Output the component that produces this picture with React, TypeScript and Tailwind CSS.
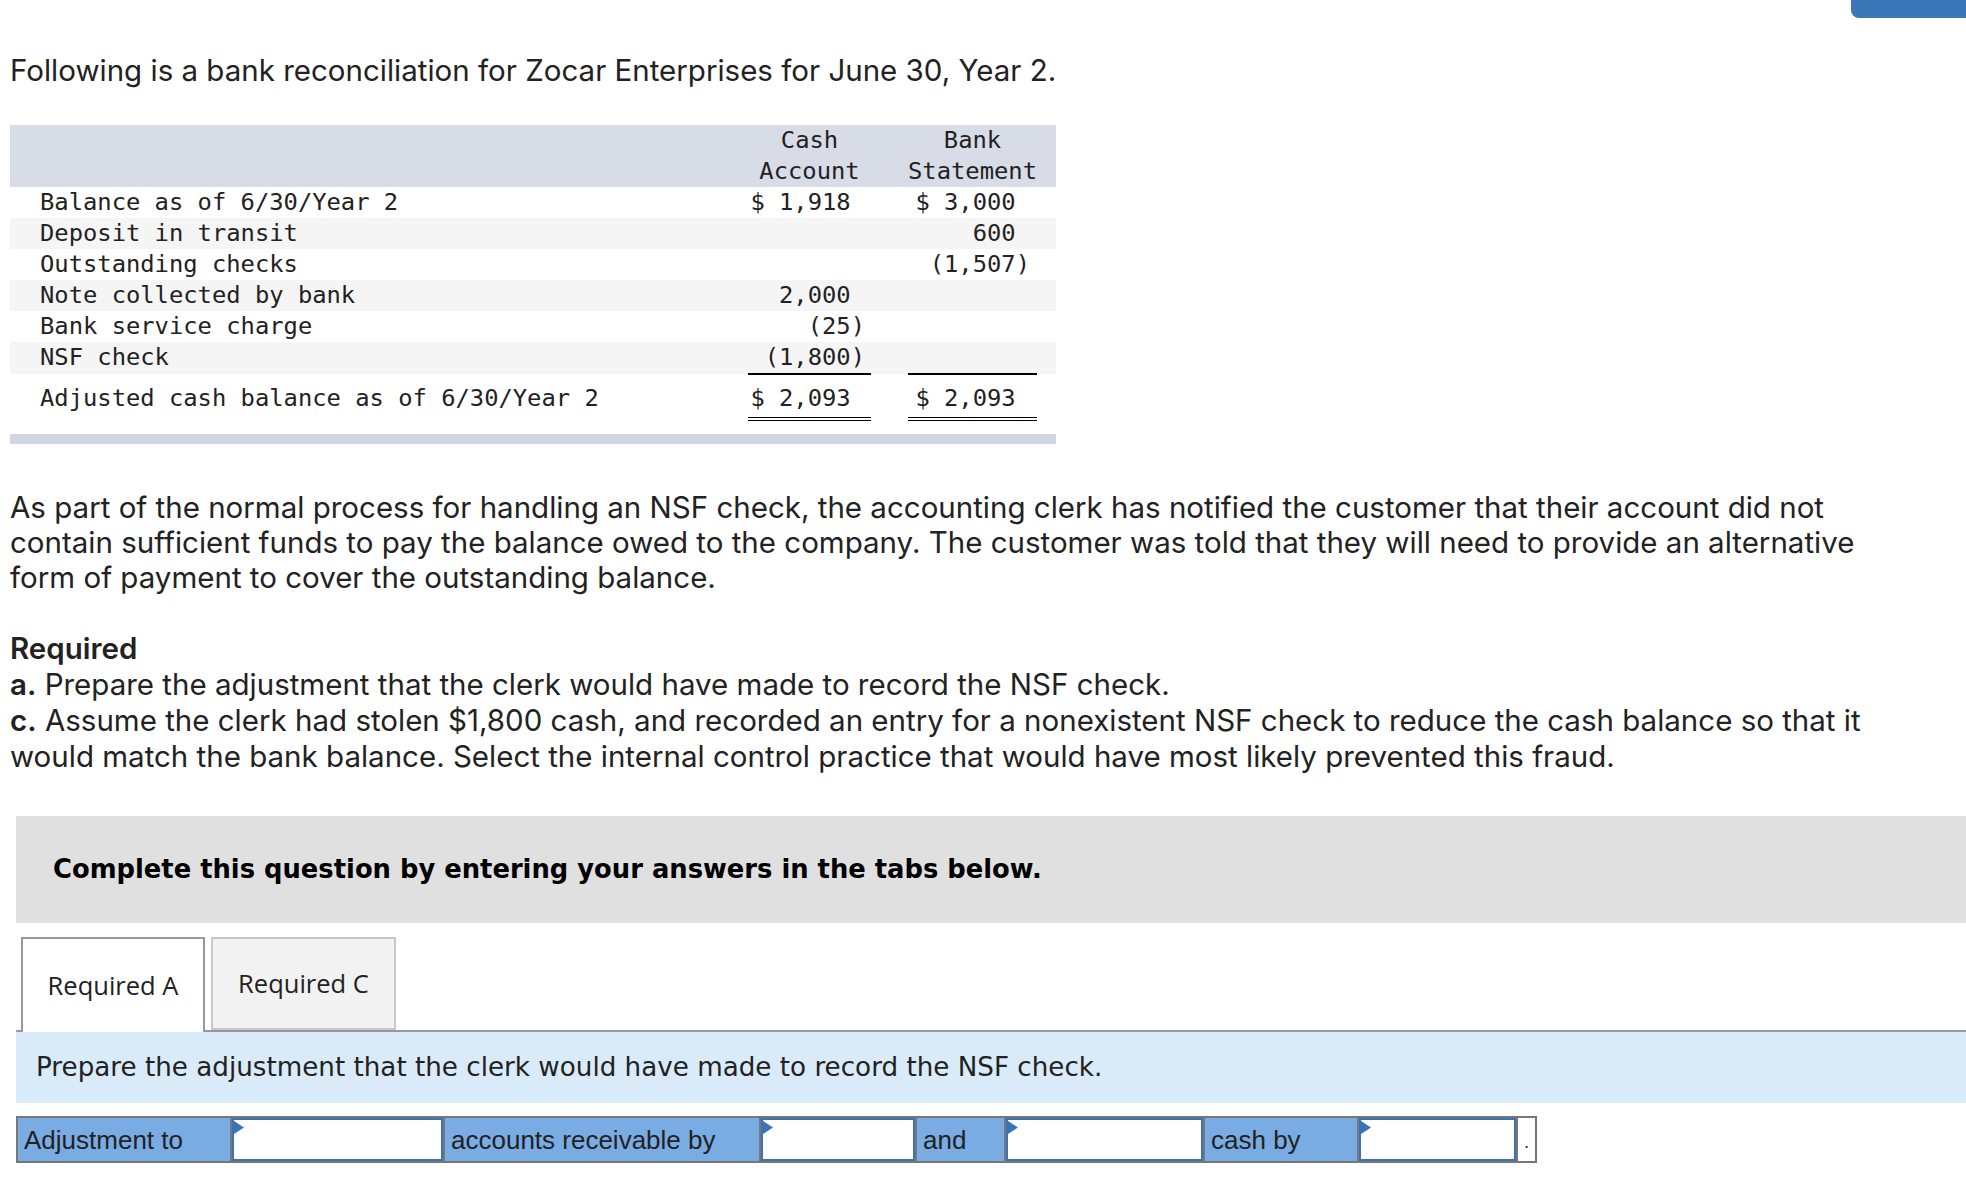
import React from "react";

type Row = {
  label: string;
  cash?: string;
  bank?: string;
  shaded?: boolean;
};

const rows: Row[] = [
  { label: "Balance as of 6/30/Year 2", cash: "$ 1,918", bank: "$ 3,000" },
  { label: "Deposit in transit", bank: "600", shaded: true },
  { label: "Outstanding checks", bank: "(1,507)" },
  { label: "Note collected by bank", cash: "2,000", shaded: true },
  { label: "Bank service charge", cash: "(25)" },
];

// positives get a trailing space so they line up with the closing paren
const amt = (v?: string) => {
  if (!v) return "";
  return v.endsWith(")") ? v : v + "\u00a0";
};

const gridCols = "grid grid-cols-[1fr_123px_129px] gap-x-[37px] pl-[30px] pr-[19px]";

const Reconciliation: React.FC = () => (
  <div className="mt-[37px] w-[1046px] font-['DejaVu_Sans_Mono',monospace] text-[23.8px] leading-[31px] text-[#222]">
    {/* header */}
    <div className={`${gridCols} h-[62px] bg-[#d8dce6]`}>
      <div />
      <div className="text-center">
        Cash
        <br />
        Account
      </div>
      <div className="text-center">
        Bank
        <br />
        Statement
      </div>
    </div>

    {rows.map((r) => (
      <div
        key={r.label}
        className={`${gridCols} h-[31px] ${r.shaded ? "bg-[#f5f5f5]" : "bg-white"}`}
      >
        <div className="whitespace-pre">{r.label}</div>
        <div className="whitespace-pre pr-[6px] text-right">{amt(r.cash)}</div>
        <div className="whitespace-pre pr-[7px] text-right">{amt(r.bank)}</div>
      </div>
    ))}

    <div className={`${gridCols} h-[32px] bg-[#f5f5f5]`}>
      <div>NSF check</div>
      <div className="whitespace-pre border-b-2 border-black pr-[6px] text-right">(1,800)</div>
      <div className="border-b-2 border-black" />
    </div>

    <div className={`${gridCols} bg-white pb-[13px] pt-[9px]`}>
      <div className="whitespace-pre">Adjusted cash balance as of 6/30/Year 2</div>
      <div className="whitespace-pre border-b-4 border-double border-black pb-[3px] pr-[6px] text-right">
        {amt("$ 2,093")}
      </div>
      <div className="whitespace-pre border-b-4 border-double border-black pb-[3px] pr-[7px] text-right">
        {amt("$ 2,093")}
      </div>
    </div>
    <div className="h-[10px] bg-[#cfd5e1]" />
  </div>
);

const Caret: React.FC = () => (
  <svg
    className="absolute left-0 top-[1px]"
    width="10"
    height="13"
    viewBox="0 0 10 13"
  >
    <polygon points="0,0 10,6.5 0,13" fill="#3b73b7" />
  </svg>
);

const Blank: React.FC<{ w: string }> = ({ w }) => (
  <div className={`relative ${w} border-2 border-[#3b73b7] bg-white`}>
    <Caret />
  </div>
);

const Label: React.FC<{ w: string; children: React.ReactNode }> = ({ w, children }) => (
  <div className={`flex ${w} items-center bg-[#79ace3] pl-[6px] whitespace-nowrap`}>
    {children}
  </div>
);

export default function App() {
  return (
    <div className="relative min-h-screen bg-white pb-10 text-[#222]">
      <div className="absolute right-0 top-0 h-[18px] w-[115px] rounded-bl-[8px] bg-[#3b76b9]" />

      <div className="pl-[10px] pt-[53px] font-['Inter',sans-serif] text-[29.5px] leading-[35px]">
        <p>Following is a bank reconciliation for Zocar Enterprises for June 30, Year 2.</p>

        <Reconciliation />

        <p className="mt-[46px]">
          As part of the normal process for handling an NSF check, the accounting clerk has notified the customer that their account did not
          <br />
          contain sufficient funds to pay the balance owed to the company. The customer was told that they will need to provide an alternative
          <br />
          form of payment to cover the outstanding balance.
        </p>

        <div className="mt-[35px] leading-[36px]">
          <p className="font-semibold">Required</p>
          <p>
            <span className="font-semibold">a.</span> Prepare the adjustment that the clerk would have made to record the NSF check.
          </p>
          <p>
            <span className="font-semibold">c.</span> Assume the clerk had stolen $1,800 cash, and recorded an entry for a nonexistent NSF check to reduce the cash balance so that it
            <br />
            would match the bank balance. Select the internal control practice that would have most likely prevented this fraud.
          </p>
        </div>
      </div>

      <div className="ml-[16px] mt-[42px]">
        <div className="flex h-[107px] items-center bg-[#e0e0e0] pl-[37px] font-['DejaVu_Sans',sans-serif] text-[25.8px] font-bold text-black">
          Complete this question by entering your answers in the tabs below.
        </div>

        {/* tabs */}
        <div className="mt-[14px] flex items-end gap-[6px] border-b-2 border-[#999] pl-[5px] font-['Open_Sans',sans-serif] text-[25.5px] text-[#222]">
          <div className="relative -mb-[2px] flex h-[95px] w-[184px] items-center justify-center border-2 border-b-0 border-[#999] bg-white">
            Required A
          </div>
          <div className="flex h-[93px] w-[185px] items-center justify-center border-2 border-[#c8c8c8] bg-[#f2f2f2]">
            Required C
          </div>
        </div>

        <div className="flex h-[71px] items-center bg-[#d9ebf9] pl-[20px] font-['DejaVu_Sans',sans-serif] text-[26.2px] text-[#222]">
          Prepare the adjustment that the clerk would have made to record the NSF check.
        </div>

        {/* fill-in sentence */}
        <div className="mt-[13px] flex h-[47px] w-[1521px] gap-[2px] bg-[#777] p-[2px] font-['Liberation_Sans',Arial,sans-serif] text-[26px] leading-none text-[#222]">
          <Label w="w-[212px]">Adjustment to</Label>
          <Blank w="w-[211px]" />
          <Label w="w-[314px]">accounts receivable by</Label>
          <Blank w="w-[154px]" />
          <Label w="w-[87px]">and</Label>
          <Blank w="w-[197px]" />
          <Label w="w-[152px]">cash by</Label>
          <Blank w="w-[157px]" />
          <div className="flex w-[17px] items-end justify-center bg-white pb-[10px] text-[18px]">.</div>
        </div>
      </div>
    </div>
  );
}
